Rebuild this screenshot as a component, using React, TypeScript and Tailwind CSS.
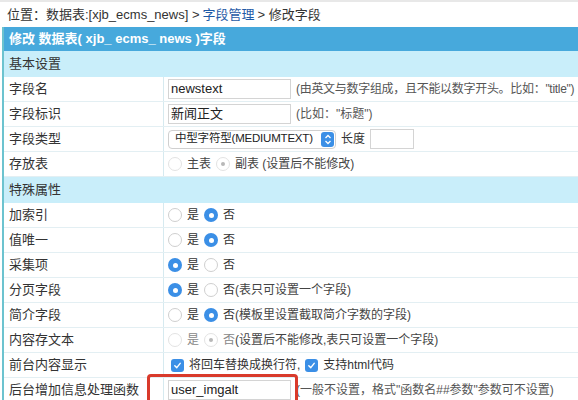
import React from "react";

const FONT = { fontFamily: '"Helvetica Neue", "Liberation Sans", "Noto Sans CJK SC", sans-serif' };

function Radio({ on, disabled }: { on?: boolean; disabled?: boolean }) {
  if (disabled) {
    return (
      <span className="inline-flex h-[14px] w-[14px] shrink-0 items-center justify-center rounded-full border border-[#e3e3e3] bg-white">
        {on && <span className="h-[4px] w-[4px] rounded-full bg-[#b8b8b8]" />}
      </span>
    );
  }
  if (on) {
    return (
      <span className="inline-flex h-[14px] w-[14px] shrink-0 items-center justify-center rounded-full bg-[#3b8fe6]">
        <span className="h-[5px] w-[5px] rounded-full bg-white" />
      </span>
    );
  }
  return <span className="inline-block h-[14px] w-[14px] shrink-0 rounded-full border border-[#cfcfcf] bg-white" />;
}

function Check() {
  return (
    <span className="inline-flex h-[13px] w-[13px] shrink-0 items-center justify-center rounded-[3px] bg-[#3b8fe6]">
      <svg width="9" height="9" viewBox="0 0 10 10">
        <path d="M2 5.2 L4.2 7.4 L8 2.6" fill="none" stroke="white" strokeWidth="1.6" strokeLinecap="round" strokeLinejoin="round" />
      </svg>
    </span>
  );
}

function YesNo({ yes, disabled, note }: { yes: boolean; disabled?: boolean; note?: string }) {
  const c = disabled ? "text-[#888]" : "text-[#333]";
  return (
    <div className="flex items-center gap-[5px]">
      <Radio on={yes} disabled={disabled} />
      <span className={c}>是</span>
      <Radio on={!yes} disabled={disabled} />
      <span className={c}>
        否{note && <span className="text-[#444]">{note}</span>}
      </span>
    </div>
  );
}

function Row({ label, children }: { label: string; children: React.ReactNode }) {
  return (
    <div className="grid h-[25px] grid-cols-[160px_1fr] border-b border-[#e3eff3]">
      <div className="flex items-center border-r border-[#d6eaf0] pl-[5px]">{label}</div>
      <div className="flex items-center pl-[4px] text-[12px]">{children}</div>
    </div>
  );
}

function Section({ label }: { label: string }) {
  return (
    <div className="flex h-[26px] items-center bg-[#c9eefa] pl-[5px] text-[#333]">{label}</div>
  );
}

function Input({ value }: { value?: string }) {
  return (
    <div className="flex h-[20px] w-[123px] shrink-0 items-center border border-[#d4d4d4] bg-white px-[2px] text-[13px] text-[#222]">
      {value}
    </div>
  );
}

export default function App() {
  return (
    <div style={FONT} className="h-[400px] w-[578px] overflow-hidden whitespace-nowrap bg-white text-[13px] text-[#333]">
      <div className="flex h-[27px] items-center border-t-2 border-[#e8e8e8] pl-[7px] text-[#333]">
        位置：数据表:[xjb_ecms_news] &gt; <span className="mx-[3px] text-[#1f5aa6]">字段管理</span> &gt; 修改字段
      </div>
      <div className="ml-[2px] border-l-2 border-[#6cc3cf]">
        <div className="flex h-[24px] items-center bg-[#47a9dc] pl-[5px] font-bold text-white">
          修改 数据表( xjb_ ecms_ news )字段
        </div>
        <Section label="基本设置" />
        <Row label="字段名">
          <Input value="newstext" />
          <span className="ml-[5px] tracking-[-0.3px] text-[#555]">(由英文与数字组成，且不能以数字开头。比如："title")</span>
        </Row>
        <Row label="字段标识">
          <Input value="新闻正文" />
          <span className="ml-[5px] text-[#555]">(比如："标题")</span>
        </Row>
        <Row label="字段类型">
          <div className="flex h-[19px] w-[168px] shrink-0 items-center justify-between rounded-[4px] border border-[#d0d0d0] bg-white pl-[6px] pr-[1px] text-[11.5px] text-[#222]">
            <span className="tracking-[-0.2px]">中型字符型(MEDIUMTEXT)</span>
            <span className="flex h-[15px] w-[13px] flex-col items-center justify-center rounded-[3px] bg-[#3b8fe6]">
              <svg width="8" height="11" viewBox="0 0 8 11">
                <path d="M1.5 4 L4 1.5 L6.5 4 M1.5 7 L4 9.5 L6.5 7" fill="none" stroke="white" strokeWidth="1.3" />
              </svg>
            </span>
          </div>
          <span className="ml-[5px]">长度</span>
          <div className="ml-[5px] h-[20px] w-[44px] border border-[#d4d4d4] bg-white" />
        </Row>
        <Row label="存放表">
          <div className="flex items-center gap-[5px] text-[#444]">
            <Radio disabled />
            <span>主表</span>
            <Radio disabled on />
            <span>副表 (设置后不能修改)</span>
          </div>
        </Row>
        <Section label="特殊属性" />
        <Row label="加索引">
          <YesNo yes={false} />
        </Row>
        <Row label="值唯一">
          <YesNo yes={false} />
        </Row>
        <Row label="采集项">
          <YesNo yes />
        </Row>
        <Row label="分页字段">
          <YesNo yes note="(表只可设置一个字段)" />
        </Row>
        <Row label="简介字段">
          <YesNo yes={false} note="(模板里设置截取简介字数的字段)" />
        </Row>
        <Row label="内容存文本">
          <YesNo yes={false} disabled note="(设置后不能修改,表只可设置一个字段)" />
        </Row>
        <Row label="前台内容显示">
          <div className="flex items-center gap-[5px] pl-[3px]">
            <Check />
            <span>将回车替换成换行符,</span>
            <Check />
            <span>支持html代码</span>
          </div>
        </Row>
        <Row label="后台增加信息处理函数">
          <div className="relative flex items-center">
            <Input value="user_imgalt" />
            <span className="ml-[5px] text-[#555]">(一般不设置，格式"函数名##参数"参数可不设置)</span>
            <div className="pointer-events-none absolute left-[-21px] top-[-6px] h-[40px] w-[151px] rounded-[4px] border-[3px] border-[#d93a2b]" />
          </div>
        </Row>
      </div>
    </div>
  );
}
